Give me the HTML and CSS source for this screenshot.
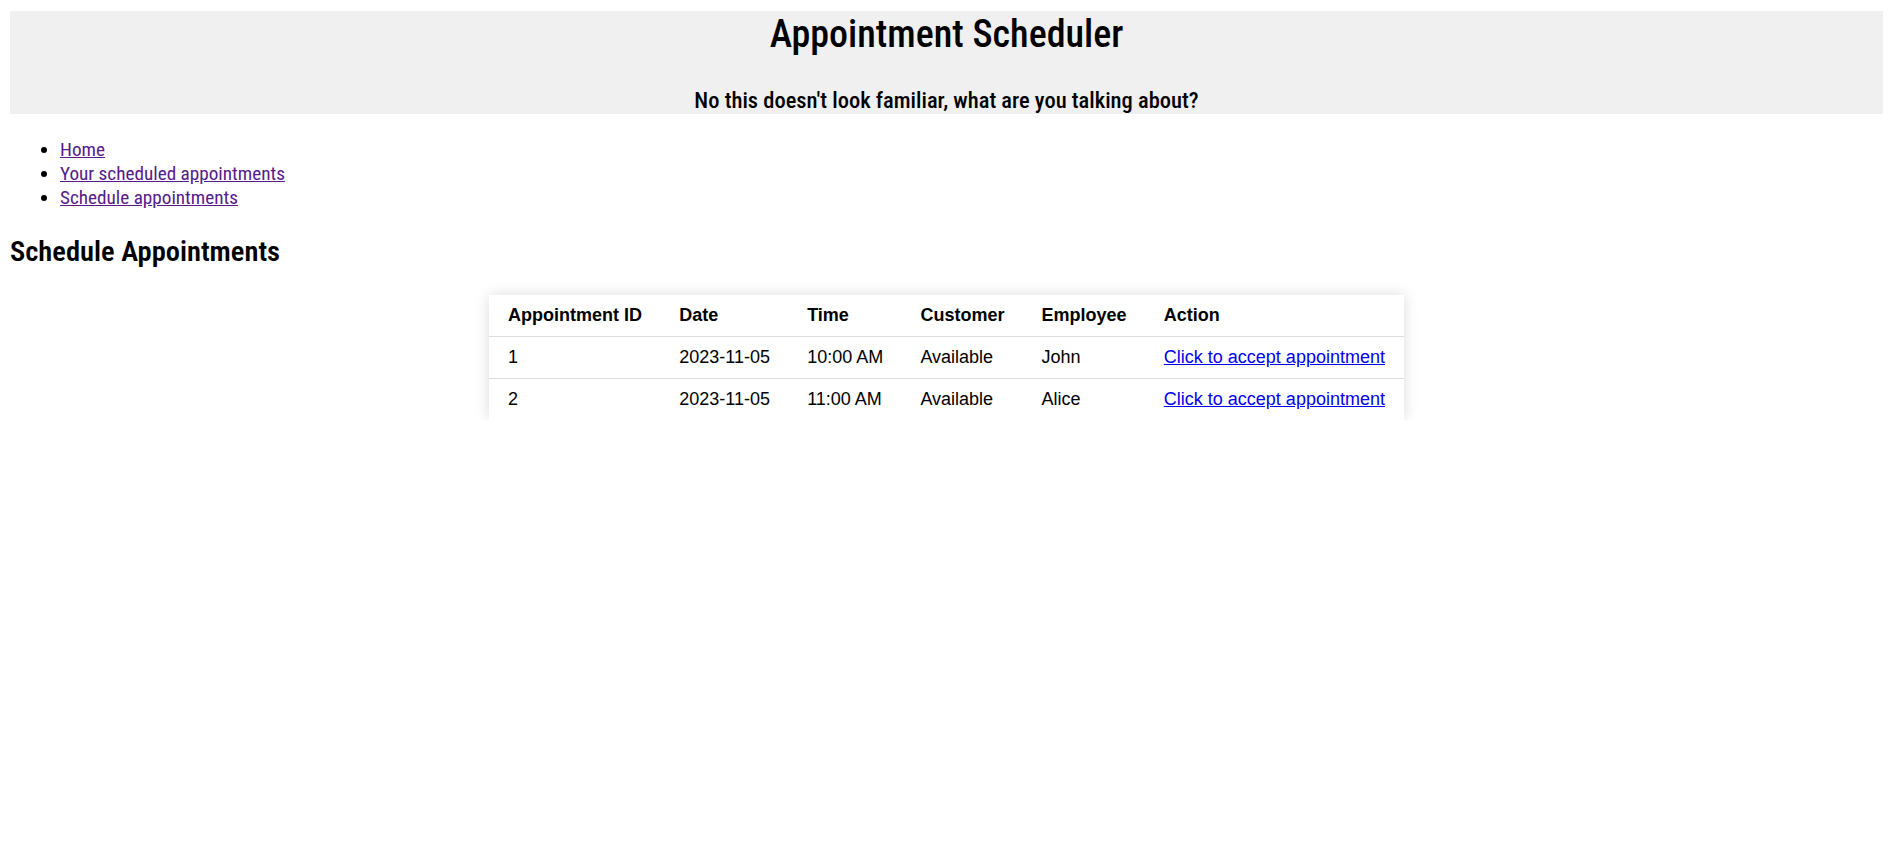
FILE: index.html
```html
<!DOCTYPE html>
<html lang="en">
<head>
<meta charset="utf-8">
<title>Appointment Scheduler</title>
<link rel="stylesheet" href="styles.css">
</head>
<body>
<header class="site-header">
  <h1 class="site-title">Appointment Scheduler</h1>
  <h3 class="site-subtitle">No this doesn't look familiar, what are you talking about?</h3>
</header>
<ul class="nav">
  <li><a class="nav-link" href="#">Home</a></li>
  <li><a class="nav-link" href="#">Your scheduled appointments</a></li>
  <li><a class="nav-link" href="#">Schedule appointments</a></li>
</ul>
<h2 class="page-title">Schedule Appointments</h2>
<table class="appt-table">
  <thead>
    <tr>
      <th>Appointment ID</th>
      <th>Date</th>
      <th>Time</th>
      <th>Customer</th>
      <th>Employee</th>
      <th>Action</th>
    </tr>
  </thead>
  <tbody>
    <tr>
      <td>1</td>
      <td>2023-11-05</td>
      <td>10:00 AM</td>
      <td>Available</td>
      <td>John</td>
      <td><a class="accept-link" href="#">Click to accept appointment</a></td>
    </tr>
    <tr>
      <td>2</td>
      <td>2023-11-05</td>
      <td>11:00 AM</td>
      <td>Available</td>
      <td>Alice</td>
      <td><a class="accept-link" href="#">Click to accept appointment</a></td>
    </tr>
  </tbody>
</table>
</body>
</html>
```
FILE: styles.css
```css
body {
  margin: 11px 10px 10px;
  font-family: "Roboto Condensed", Roboto, sans-serif;
  font-stretch: condensed;
  font-size: 19.2px;
  color: #000;
  background: #fff;
}

.site-header {
  background: #f0f0f0;
  text-align: center;
}

.site-title {
  margin: 0 0 30px;
  font-size: 38px;
  line-height: 46px;
  font-weight: 500;
}

.site-subtitle {
  margin: 0;
  font-size: 22.5px;
  line-height: 27px;
  font-weight: 500;
}

.nav {
  margin: 24px 0 0;
  padding-left: 50px;
  line-height: 24px;
}

.nav-link {
  color: #551a8b;
}

.page-title {
  margin: 25px 0 26px;
  font-size: 28.5px;
  line-height: 34px;
  font-weight: 600;
}

.appt-table {
  margin: 0 auto;
  border-collapse: collapse;
  background: #fff;
  box-shadow: 0 0 14px rgba(0, 0, 0, 0.14);
  font-family: "Liberation Sans", Arial, sans-serif;
  font-stretch: normal;
  font-size: 18px;
}

.appt-table th,
.appt-table td {
  padding: 10px 18.6px;
  text-align: left;
  line-height: 21px;
}

.appt-table th {
  font-weight: bold;
}

.appt-table tbody tr {
  border-top: 1px solid #dddddd;
}

.accept-link {
  color: #0000ee;
}
```
